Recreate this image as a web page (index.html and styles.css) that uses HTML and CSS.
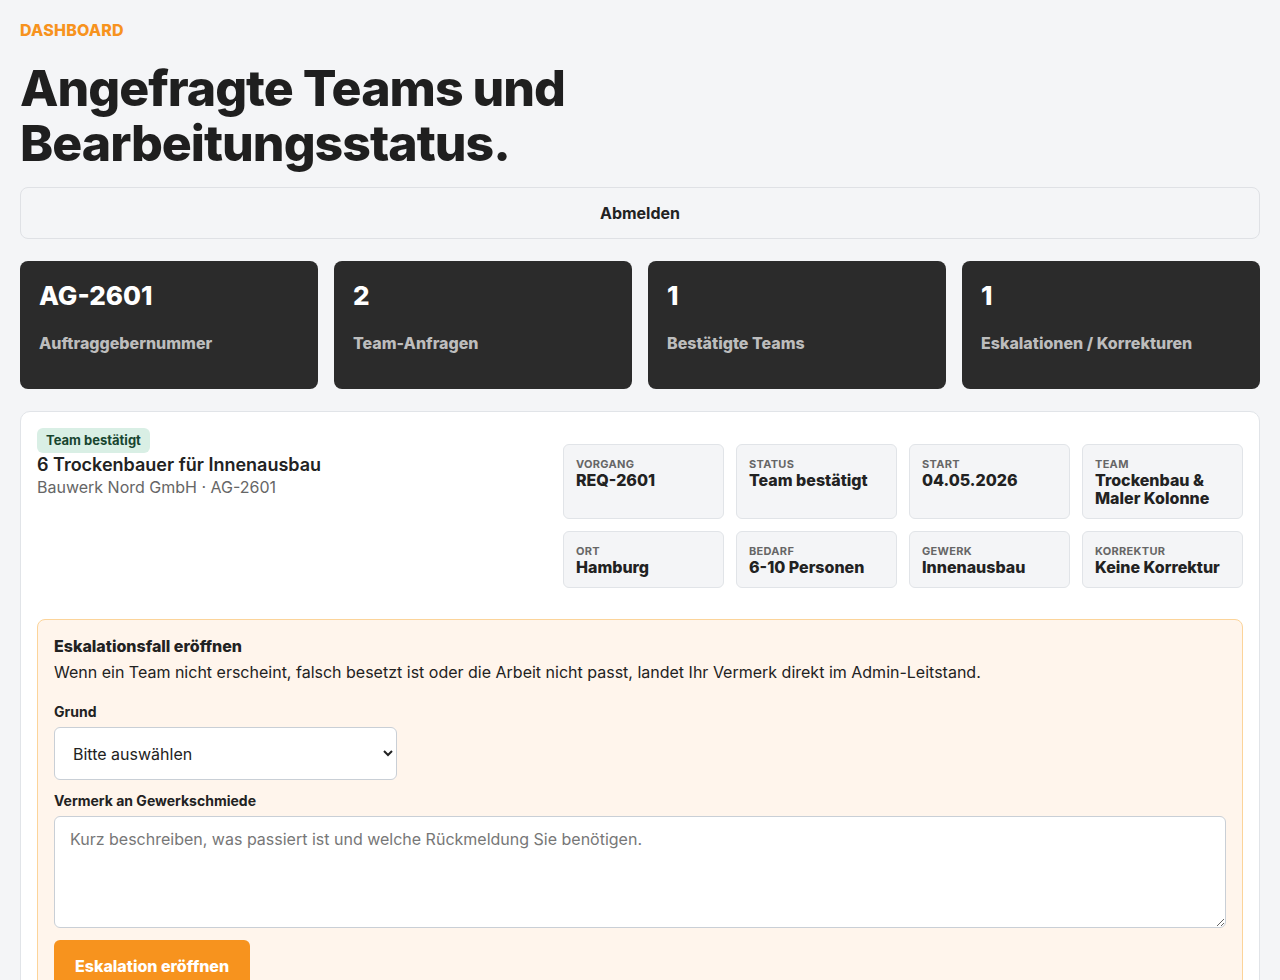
FILE: index.html
```html
<!DOCTYPE html>
<html>
<head>
    <title>Dashboard</title>
    <link rel="stylesheet" href="styles.css">
</head>
<body>
    <div class="eyebrow">DASHBOARD</div>
    <h1>Angefragte Teams und<br>Bearbeitungsstatus.</h1>

    <button class="logout">Abmelden</button>

    <div class="stats">
        <div class="stat"><strong>AG-2601</strong><span>Auftraggebernummer</span></div>
        <div class="stat"><strong>2</strong><span>Team-Anfragen</span></div>
        <div class="stat"><strong>1</strong><span>Bestätigte Teams</span></div>
        <div class="stat"><strong>1</strong><span>Eskalationen / Korrekturen</span></div>
    </div>

    <div class="card">
        <div class="card-head">
            <div class="card-title">
                <span class="badge">Team bestätigt</span>
                <h2>6 Trockenbauer für Innenausbau</h2>
                <p class="sub">Bauwerk Nord GmbH · AG-2601</p>
            </div>
            <div class="meta">
                <div class="meta-item"><small>Vorgang</small><b>REQ-2601</b></div>
                <div class="meta-item"><small>Status</small><b>Team bestätigt</b></div>
                <div class="meta-item"><small>Start</small><b>04.05.2026</b></div>
                <div class="meta-item"><small>Team</small><b>Trockenbau &amp; Maler Kolonne</b></div>
                <div class="meta-item"><small>Ort</small><b>Hamburg</b></div>
                <div class="meta-item"><small>Bedarf</small><b>6-10 Personen</b></div>
                <div class="meta-item"><small>Gewerk</small><b>Innenausbau</b></div>
                <div class="meta-item"><small>Korrektur</small><b>Keine Korrektur</b></div>
            </div>
        </div>

        <div class="escalation">
            <h3>Eskalationsfall eröffnen</h3>
            <p>Wenn ein Team nicht erscheint, falsch besetzt ist oder die Arbeit nicht passt, landet Ihr Vermerk direkt im Admin-Leitstand.</p>
            <label for="reason">Grund</label>
            <select id="reason">
                <option>Bitte auswählen</option>
                <option>Team nicht erschienen</option>
                <option>Falsch besetzt</option>
                <option>Arbeit passt nicht</option>
            </select>
            <label for="note">Vermerk an Gewerkschmiede</label>
            <textarea id="note" placeholder="Kurz beschreiben, was passiert ist und welche Rückmeldung Sie benötigen."></textarea>
            <button class="primary">Eskalation eröffnen</button>
        </div>
    </div>
</body>
</html>
```

FILE: styles.css
```css
body { font-family: Inter, "Noto Sans", sans-serif; background: #f4f5f7; color: #222; margin: 0; padding: 20px; }
.eyebrow { color: #f7931e; font-weight: 800; font-size: 16px; letter-spacing: 0.2px; }
h1 { font-size: 50px; font-weight: 800; line-height: 55px; letter-spacing: -1px; margin: 21px 0 16px; color: #1f1f1f; }
.logout { display: block; width: 100%; height: 52px; background: #f4f5f7; border: 1px solid #dfe1e5; border-radius: 8px; font: 700 16px Inter, sans-serif; color: #222; margin-bottom: 22px; }
.stats { display: grid; grid-template-columns: repeat(4, 1fr); gap: 16px; margin-bottom: 22px; }
.stat { background: #2b2b2b; border-radius: 8px; height: 128px; padding: 20px 19px; box-sizing: border-box; display: flex; flex-direction: column; gap: 22px; }
.stat strong { color: #fff; font-size: 26px; font-weight: 800; line-height: 30px; }
.stat span { color: #bdbdbd; font-size: 16px; font-weight: 800; }
.card { background: #fff; border: 1px solid #e1e4e8; border-radius: 10px; padding: 16px; }
.card-head { display: flex; justify-content: space-between; }
.badge { display: inline-block; background: #d9efe5; color: #17452f; font-size: 13px; font-weight: 700; padding: 4px 9px; border-radius: 6px; line-height: 17px; }
h2 { font-size: 18px; font-weight: 600; margin: 1px 0 0; line-height: 22px; }
.sub { color: #666; margin: 0; font-size: 16px; line-height: 22px; }
.meta { width: 680px; display: grid; grid-template-columns: repeat(4, 1fr); gap: 12px; margin-top: 16px; }
.meta-item { background: #f4f5f7; border: 1px solid #e1e4e8; border-radius: 6px; padding: 12px 12px 11px; display: flex; flex-direction: column; }
.meta-item small { text-transform: uppercase; color: #666; font-size: 11px; font-weight: 700; letter-spacing: 0.3px; line-height: 14px; }
.meta-item b { font-size: 16px; font-weight: 800; line-height: 18px; color: #222; }
.escalation { margin-top: 31px; background: #fff5ec; border: 1px solid #fcd49a; border-radius: 8px; padding: 16px; }
h3 { margin: 0 0 5px; font-size: 16px; font-weight: 800; line-height: 20px; }
.escalation p { margin: 0 0 20px; font-size: 16px; line-height: 22px; }
label { display: block; font-size: 14px; font-weight: 700; margin-bottom: 7px; }
select { width: 343px; height: 53px; padding: 0 14px; border: 1px solid #c9cfd6; border-radius: 6px; background: #fff; font: 16px Inter, sans-serif; color: #222; margin-bottom: 12px; }
textarea { display: block; width: 100%; box-sizing: border-box; height: 112px; padding: 12px 15px; border: 1px solid #c9cfd6; border-radius: 6px; font: 16px Inter, sans-serif; resize: vertical; margin-bottom: 12px; }
textarea::placeholder { color: #777; }
.primary { background: #f7931e; color: #fff; border: 0; border-radius: 6px; font: 800 16px Inter, sans-serif; padding: 0 21px; height: 52px; }
```
